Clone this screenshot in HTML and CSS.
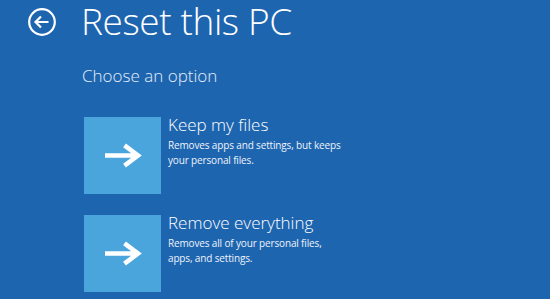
FILE: index.html
```html
<!DOCTYPE html>
<html lang="en">
<head>
<meta charset="utf-8">
<title>Reset this PC</title>
<link rel="stylesheet" href="styles.css">
</head>
<body>
<main class="screen">
  <header class="header">
    <svg class="back" width="30" height="30" viewBox="0 0 30 30" aria-label="Back">
      <circle cx="15" cy="15" r="12.8" fill="none" stroke="#fff" stroke-width="2.2"/>
      <path d="M8.5 15 H21.5 M14 9.5 L8.5 15 L14 20.5" fill="none" stroke="#fff" stroke-width="2.2" stroke-linecap="butt" stroke-linejoin="miter"/>
    </svg>
    <h1 class="title">Reset this PC</h1>
  </header>
  <h2 class="subtitle">Choose an option</h2>
  <ul class="options">
    <li class="option">
      <div class="tile">
        <svg width="37" height="25" viewBox="0 0 37 25"><path d="M0 12.5 H33 M19.5 2.3 L33 12.5 L19.5 22.7" fill="none" stroke="#fff" stroke-width="4.6" stroke-linejoin="miter"/></svg>
      </div>
      <div class="text">
        <div class="name">Keep my files</div>
        <div class="desc">Removes apps and settings, but keeps<br>your personal files.</div>
      </div>
    </li>
    <li class="option">
      <div class="tile">
        <svg width="37" height="25" viewBox="0 0 37 25"><path d="M0 12.5 H33 M19.5 2.3 L33 12.5 L19.5 22.7" fill="none" stroke="#fff" stroke-width="4.6" stroke-linejoin="miter"/></svg>
      </div>
      <div class="text">
        <div class="name">Remove everything</div>
        <div class="desc">Removes all of your personal files,<br>apps, and settings.</div>
      </div>
    </li>
  </ul>
</main>
</body>
</html>
```
FILE: styles.css
```css
html, body {
  margin: 0;
  padding: 0;
  background: #1e65b0;
}
body {
  width: 550px;
  height: 299px;
  overflow: hidden;
  font-family: "Open Sans", "Noto Sans", sans-serif;
  color: #fff;
}
.screen {
  padding-left: 27px;
}
.header {
  display: flex;
  align-items: center;
  height: 50px;
  margin-top: -4px;
}
.back {
  display: block;
  margin-top: 2px;
}
.title {
  margin: 0 0 0 24px;
  font-size: 37px;
  font-weight: 300;
  line-height: 50px;
  letter-spacing: -0.4px;
}
.subtitle {
  margin: 20px 0 0 55px;
  font-size: 17px;
  font-weight: 300;
  line-height: 20px;
  color: #e6eef8;
}
.options {
  list-style: none;
  margin: 31px 0 0 57px;
  padding: 0;
  display: flex;
  flex-direction: column;
  gap: 21px;
}
.option {
  display: flex;
  gap: 7px;
}
.tile {
  width: 77px;
  height: 77px;
  background: #4ba5dd;
  display: flex;
  align-items: center;
  justify-content: center;
  flex: none;
}
.tile svg {
  display: block;
  margin-left: 1px;
}
.name {
  font-size: 17px;
  font-weight: 300;
  line-height: 16px;
}
.desc {
  margin-top: 5px;
  font-size: 10px;
  line-height: 14.5px;
  letter-spacing: -0.15px;
  color: #eef3fa;
}
```
